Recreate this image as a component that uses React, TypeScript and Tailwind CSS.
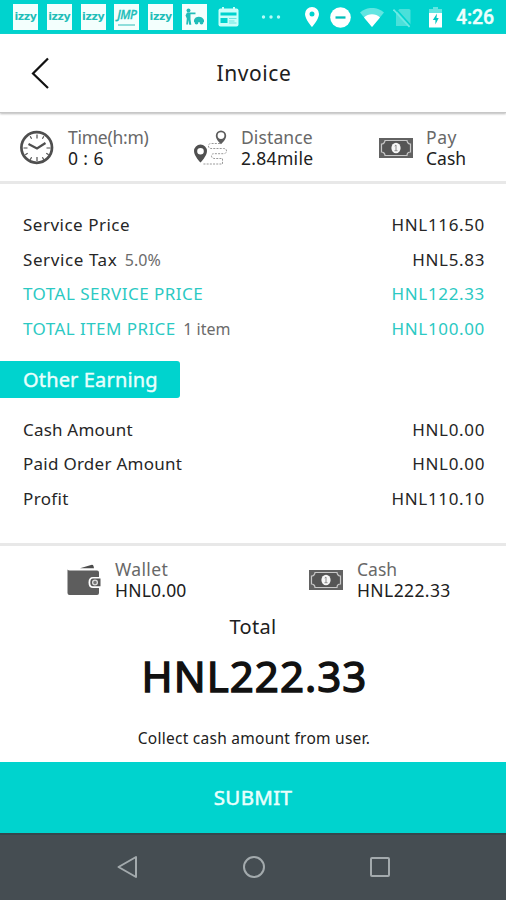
import type { ReactNode } from "react";

function AppTile({ children }: { children: ReactNode }) {
  return (
    <div className="relative flex h-[26px] w-[25px] shrink-0 items-center justify-center overflow-hidden bg-[#f3fffd] text-[#20bdb8]">
      {children}
    </div>
  );
}

function IzzyTile() {
  return (
    <AppTile>
      <span className="font-['DejaVu_Sans',sans-serif] text-[11px] leading-[14px] font-bold tracking-[-0.400px]">izzy</span>
    </AppTile>
  );
}

function StatusBar() {
  return (
    <div className="flex h-[34px] shrink-0 items-center bg-[#00d3ce] pl-[13px]">
      <div className="flex gap-[8.8px]">
        <IzzyTile />
        <IzzyTile />
        <IzzyTile />
        <AppTile>
          <div className="flex flex-col items-center">
            <span className="font-['Noto_Sans',sans-serif] text-[12px] leading-[13px] font-medium italic tracking-[-0.5px] [-webkit-text-stroke:0.3px]">JMP</span>
            <span className="mt-[3px] h-[2px] w-[17px] bg-[#8fdedb]" />
          </div>
        </AppTile>
        <IzzyTile />
        <AppTile>
          <svg width="25" height="26" viewBox="0 0 25 26" fill="currentColor">
            <circle cx="6.5" cy="6.500" r="2" />
            <path d="M5 8.500h8.500v1.800H8.500v5l.8 5.500H7.200L6.500 16 6 20.500H4.200l.6-6-1.300-3Z" />
            <path d="M12 16c1-4.500 8.500-4.500 10 0v2H12z" />
            <circle cx="14.500" cy="18.500" r="1.900" />
            <circle cx="19.500" cy="18.500" r="1.900" />
          </svg>
        </AppTile>
      </div>
      <svg className="ml-[11px] shrink-0" width="21" height="20" viewBox="0 0 21 20">
        <rect x="0.500" y="1.500" width="20" height="18" rx="2" fill="#c9fffa" />
        <path d="M4 0h2v3H4zM15 0h2v3h-2z" fill="#c9fffa" />
        <path d="M2.500 5.500h16v3h-16zM2.500 11h7v5h-7z" fill="#00d3ce" />
        <path d="M11 11.500h7.500M11 14h5.500M11 16h7.500" stroke="#6ae6e1" />
      </svg>
      <svg className="ml-[22.500px] shrink-0" width="20" height="6" viewBox="0 0 20 6" fill="#b4fbf7">
        <circle cx="2.500" cy="3" r="1.700" />
        <circle cx="10" cy="3" r="1.700" />
        <circle cx="17.500" cy="3" r="1.700" />
      </svg>
      <svg className="ml-[22.500px] shrink-0" width="16" height="20" viewBox="0 0 16 20">
        <path fill="#fff" fillRule="evenodd" d="M8 0a7 7 0 0 0-7 7c0 5.300 7 13 7 13s7-7.700 7-13a7 7 0 0 0-7-7Zm0 4.600a2.500 2.500 0 1 1 0 5 2.500 2.500 0 0 1 0-5Z" />
      </svg>
      <svg className="ml-[10px] shrink-0" width="21" height="21" viewBox="0 0 21 21">
        <circle cx="10.500" cy="10.500" r="10.300" fill="#fff" />
        <path d="M5.500 10.500h10" stroke="#00bfba" strokeWidth="2.300" />
      </svg>
      <svg className="ml-[9px] shrink-0" width="24" height="19" viewBox="0 0 24 19">
        <path d="M0 4.500a18 18 0 0 1 24 0L12 19Z" fill="#62e5e1" />
        <path d="M4 9.500a11.500 11.500 0 0 1 16 0L12 19Z" fill="#fff" />
      </svg>
      <svg className="ml-[9px] shrink-0" width="19" height="21" viewBox="0 0 19 21">
        <path d="M6.500 2H16a1.500 1.500 0 0 1 1.500 1.500V19H3V5.500Z" fill="#4be0da" />
        <path d="M2 1 19 20" stroke="#00d3ce" strokeWidth="1.600" />
        <path d="M0.500 2.500 16.500 20" stroke="#6eeae5" strokeWidth="1.600" />
      </svg>
      <svg className="ml-[17px] shrink-0" width="13" height="22" viewBox="0 0 13 22">
        <path d="M4 1h5v2h4v5H0V3h4Z" fill="#62e5e1" />
        <path d="M0 7h13v14.500H0Z" fill="#fff" />
        <path d="M8 7.500 3.800 14h2.600v4.500L9.700 12H7.500Z" fill="#00c9c4" />
      </svg>
      <span className="ml-[14px] pt-[2px] font-['Roboto',sans-serif] text-[19.500px] leading-5 font-medium tracking-[-0.1px] text-[#edfffd] [-webkit-text-stroke:0.4px]">4:26</span>
    </div>
  );
}

function ClockIcon() {
  return (
    <svg width="34" height="36" viewBox="0 0 34 36" fill="none" stroke="#4f4f4f">
      <circle cx="16.700" cy="17.500" r="15.300" strokeWidth="2.700" />
      <path d="M8.500 14 17 18.500 25.500 13" strokeWidth="2.200" />
      <path d="M17 4.500v4M17 27v4M3.500 18h4M26.500 18h4M10.200 6.300l1.400 2.400M23.800 6.300l-1.400 2.400M5.300 24.700l2.400-1.400M28.700 24.700l-2.400-1.400M10.200 29.700l1.400-2.400M23.800 29.700l-1.400-2.400" strokeWidth="1.200" />
    </svg>
  );
}

function RouteIcon() {
  return (
    <svg width="35" height="36" viewBox="0 0 35 36">
      <path fill="#505050" fillRule="evenodd" d="M7.500 14.500A6.500 6.500 0 0 0 1 21C1 26 7.500 32.500 7.500 32.500S14 26 14 21A6.500 6.500 0 0 0 7.500 14.500Zm0 3.500a3.300 3.300 0 1 1 0 6.600 3.300 3.300 0 0 1 0-6.600Z" />
      <path fill="#5c5c5c" fillRule="evenodd" d="M28 .5A5.200 5.200 0 0 0 22.800 5.700c0 4 5.200 8.500 5.200 8.500s5.200-4.500 5.200-8.500A5.200 5.200 0 0 0 28 .5Zm0 1.700a3.400 3.400 0 1 1 0 6.800 3.400 3.400 0 0 1 0-6.800Z" />
      <path d="M27 13.500H18q-2.500 0-2.500 2.500t2.500 2.500h12.500q3 0 3 2.500t-3 2.700H21q-2.500 0-2.500 2.200t2.500 2.600h8.500v5.500H10" fill="none" stroke="#999" strokeDasharray="2 1.200" />
    </svg>
  );
}

function CashIcon() {
  return (
    <svg width="34" height="20" viewBox="0 0 34 20">
      <path d="M0 0h34v20H0z" fill="#626262" />
      <path d="M6 2.500h22a3.500 3.500 0 0 0 3.500 3.500v8a3.500 3.500 0 0 0-3.500 3.500H6A3.500 3.500 0 0 0 2.500 14V6A3.500 3.500 0 0 0 6 2.500Z" fill="#555" stroke="#c8c8c8" strokeWidth="1.200" />
      <ellipse cx="17" cy="10" rx="4.600" ry="5.200" fill="#f7f7f7" />
      <path d="M15.700 8 17 7v5.500M15.500 12.700h3" fill="none" stroke="#8a8a8a" />
    </svg>
  );
}

function WalletIcon() {
  return (
    <svg width="34" height="33" viewBox="0 0 34 33">
      <path d="M13 4.200 24 .9q2-.6 2.500 1l.5 2.300Z" fill="#4c4c4c" />
      <path d="M.5 5.500q.5 1 2.500 1h27q2 0 2 2v4.500h-6q-4.500 0-4.500 5.500t4.500 5.500h6v5q0 2-2 2H2.500q-2 0-2-2Z" fill="#5d5d5d" />
      <path d="M33.500 14.500H26q-2.700 0-2.700 4T26 22.300h7.500Z" fill="#555" />
      <circle cx="28" cy="18.500" r="2.400" fill="#777" stroke="#ddd" strokeWidth="1.300" />
    </svg>
  );
}

function Fact({ label, value, labelClass, valueClass }: { label: string; value: string; labelClass: string; valueClass: string }) {
  return (
    <div className="flex flex-col text-[17.500px] leading-[21px] whitespace-nowrap">
      <span className={`text-[#686868] ${labelClass}`}>{label}</span>
      <span className={valueClass}>{value}</span>
    </div>
  );
}

type Line = { label: string; note?: string; amount: string; accent?: boolean; tracking: string };

const services: Line[] = [
  { label: "Service Price", amount: "HNL116.50", tracking: "tracking-[0.500px]" },
  { label: "Service Tax", note: "5.0%", amount: "HNL5.83", tracking: "tracking-[0.600px]" },
  { label: "TOTAL SERVICE PRICE", amount: "HNL122.33", accent: true, tracking: "tracking-[0.480px]" },
  { label: "TOTAL ITEM PRICE", note: "1 item", amount: "HNL100.00", accent: true, tracking: "tracking-[0.440px]" },
];

const earnings: Line[] = [
  { label: "Cash Amount", amount: "HNL0.00", tracking: "tracking-[0.200px]" },
  { label: "Paid Order Amount", amount: "HNL0.00", tracking: "tracking-[0.260px]" },
  { label: "Profit", amount: "HNL110.10", tracking: "tracking-[0.350px]" },
];

function LineRow({ label, note, amount, accent, tracking }: Line) {
  return (
    <div className={`flex h-[34.700px] items-center justify-between pr-[21px] pl-[23px] text-[17px] whitespace-nowrap ${accent ? "text-[#2bc9c3]" : "text-[#262626]"}`}>
      <div className="flex items-baseline gap-[7.500px]">
        <span className={tracking}>{label}</span>
        {note && <span className="text-[16px] text-[#6b6b6b]">{note}</span>}
      </div>
      <span className="text-[17px] tracking-[0.650px]">{amount}</span>
    </div>
  );
}

export default function App() {
  return (
    <div className="flex h-[900px] w-[506px] flex-col overflow-hidden bg-white font-['Noto_Sans',sans-serif] text-[#202020]">
      <StatusBar />
      <header className="grid h-[79px] shrink-0 grid-cols-[80px_1fr_80px] items-center border-b border-[#c7c7c7] shadow-[0_1px_2px_#bbb]">
        <button className="ml-[30px] w-[20px]" aria-label="Back">
          <svg width="20" height="34" viewBox="0 0 20 34" fill="none" stroke="#111" strokeWidth="2.200">
            <path d="M18 2.500 3 17.500 18 32" />
          </svg>
        </button>
        <h1 className="pt-[1px] pl-[2px] text-center text-[21px] tracking-[0.600px]">Invoice</h1>
      </header>
      <section className="flex h-[71px] shrink-0 border-b-[3px] border-[#e8e8e8] pt-[14px]">
        <div className="flex w-[174px] pl-[20px]">
          <div className="mt-[3px] w-[48px]"><ClockIcon /></div>
          <Fact label="Time(h:m)" value="0 : 6" labelClass="tracking-[-0.250px]" valueClass="tracking-[0.400px]" />
        </div>
        <div className="flex w-[205px] pl-[19px]">
          <div className="mt-[3px] w-[48px]"><RouteIcon /></div>
          <Fact label="Distance" value="2.84mile" labelClass="tracking-[0.100px]" valueClass="tracking-[0.300px]" />
        </div>
        <div className="flex">
          <div className="mt-[11px] w-[47px]"><CashIcon /></div>
          <Fact label="Pay" value="Cash" labelClass="tracking-[0.600px]" valueClass="tracking-[0px]" />
        </div>
      </section>
      <section className="h-[177px] shrink-0 pt-[23.500px]">
        {services.map((line) => <LineRow key={line.label} {...line} />)}
      </section>
      <h2 className="flex h-[37px] w-[180px] shrink-0 items-center rounded-r-[3px] bg-[#00d3ce] pl-[23px] text-[20px] tracking-[0.150px] text-[#e9fffd] [-webkit-text-stroke:0.4px]">Other Earning</h2>
      <section className="h-[148px] shrink-0 border-b-[3px] border-[#e8e8e8] pt-[14px]">
        {earnings.map((line) => <LineRow key={line.label} {...line} />)}
      </section>
      <section className="flex h-[66px] shrink-0 pt-[13px]">
        <div className="flex w-[309px] pl-[67px]">
          <div className="mt-[5px] w-[48px]"><WalletIcon /></div>
          <Fact label="Wallet" value="HNL0.00" labelClass="tracking-[0.350px]" valueClass="tracking-[0.200px]" />
        </div>
        <div className="flex">
          <div className="mt-[11px] w-[48px]"><CashIcon /></div>
          <Fact label="Cash" value="HNL222.33" labelClass="tracking-[0px]" valueClass="tracking-[0.400px]" />
        </div>
      </section>
      <section className="flex h-[150px] shrink-0 flex-col items-center">
        <p className="mt-[1px] text-[20px] leading-[28px] tracking-[0.300px]">Total</p>
        <p className="mt-[7px] pl-[3px] text-[42px] leading-[56px] font-normal tracking-[1.050px] text-[#111] [-webkit-text-stroke:1.400px]">HNL222.33</p>
        <p className="mt-[23px] pl-[2px] text-[15.500px] leading-[22px] tracking-[0.260px]">Collect cash amount from user.</p>
      </section>
      <button className="h-[71px] shrink-0 bg-[#00d3ce] text-[20.500px] tracking-[0.350px] text-[#e9fffd] [-webkit-text-stroke:0.5px]">SUBMIT</button>
      <nav className="flex h-[67px] shrink-0 items-center justify-between border-t-2 border-[#35474c] bg-[#454d52] pr-[115px] pb-[2px] pl-[116px]">
        <svg width="22" height="24" viewBox="0 0 22 24" fill="none" stroke="#a3aaad" strokeWidth="2"><path d="M20 2v20L2.500 12Z" strokeLinejoin="round" /></svg>
        <svg width="24" height="24" viewBox="0 0 24 24" fill="none" stroke="#a3aaad" strokeWidth="2"><circle cx="12" cy="12" r="10" /></svg>
        <svg width="22" height="22" viewBox="0 0 22 22" fill="none" stroke="#a3aaad" strokeWidth="2"><rect x="2" y="2" width="18" height="18" rx="1" /></svg>
      </nav>
    </div>
  );
}
